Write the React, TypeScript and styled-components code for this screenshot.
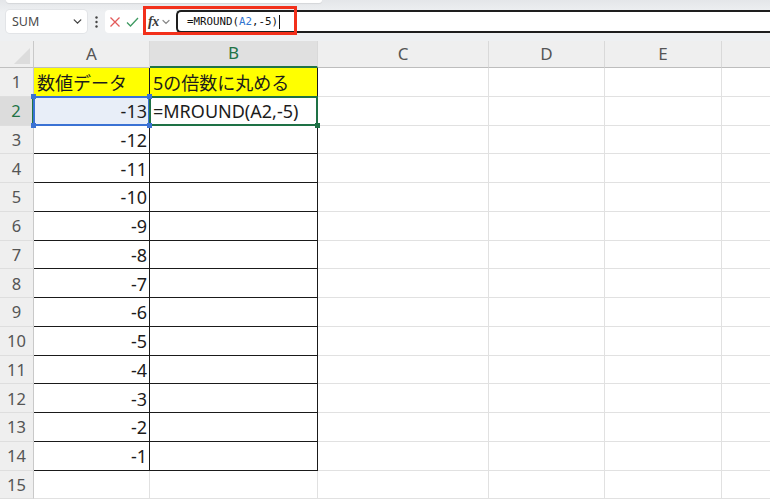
import React from 'react'
import styled, { createGlobalStyle, css } from 'styled-components'

const GlobalStyle = createGlobalStyle`
  html, body {
    margin: 0;
    padding: 0;
    background: #ffffff;
    overflow: hidden;
  }
  body {
    font-family: "Noto Sans", "Noto Sans CJK JP", sans-serif;
  }
`

const COLS = [
  { name: 'A', width: 116 },
  { name: 'B', width: 168 },
  { name: 'C', width: 171 },
  { name: 'D', width: 116 },
  { name: 'E', width: 117 },
  { name: '', width: 60 },
]

const DATA: Record<number, [string, string]> = {
  1: ['数値データ', '5の倍数に丸める'],
  2: ['-13', '=MROUND(A2,-5)'],
}
for (let r = 3; r <= 14; r++) DATA[r] = [String(r - 15), '']

const Page = styled.div`
  width: 770px;
  height: 500px;
  overflow: hidden;
  display: flex;
  flex-direction: column;
`

const TopArea = styled.div`
  position: relative;
  height: 41px;
  background: linear-gradient(#e4e6e9, #eef0f2 30%, #eef0f2);
  display: flex;
  flex-direction: column;
`

const RibbonEdge = styled.div`
  margin-left: 6px;
  width: 316px;
  height: 3px;
  background: #fff;
  border-radius: 0 0 5px 5px;
  box-shadow: 0 1px 1px rgba(0, 0, 0, 0.08);
`

const FormulaRow = styled.div`
  margin-top: 7px;
  height: 23px;
  display: flex;
  align-items: center;
  padding-left: 6px;
`

const NameBox = styled.div`
  width: 81px;
  height: 23px;
  box-sizing: border-box;
  background: #fff;
  border-radius: 4px;
  box-shadow: 0 0 0 1px #e2e4e7;
  display: flex;
  align-items: center;
  justify-content: space-between;
  padding: 0 4px 0 6px;
  font-size: 12.5px;
  color: #4a4a4a;
`

const Dots = styled.div`
  width: 18px;
  display: flex;
  justify-content: center;
`

const ActionBox = styled.div`
  width: 38px;
  height: 23px;
  background: #fff;
  border-radius: 4px 0 0 4px;
  display: flex;
  align-items: center;
  justify-content: space-around;
  padding: 0 2px;
  box-sizing: border-box;
`

const FxBox = styled.div`
  width: 33px;
  height: 23px;
  background: #fff;
  display: flex;
  align-items: center;
  padding-left: 5px;
  box-sizing: border-box;
  gap: 2px;
`

const FxText = styled.span`
  font-family: "Liberation Serif", serif;
  font-style: italic;
  font-weight: bold;
  font-size: 14px;
  color: #3a3a3a;
  letter-spacing: -0.5px;
`

const FormulaInput = styled.div`
  flex: 1;
  height: 23px;
  box-sizing: border-box;
  background: #fff;
  border: 2px solid #1e1e1e;
  border-right: none;
  border-radius: 5px 0 0 5px;
  display: flex;
  align-items: center;
  padding-left: 9px;
  font-family: "DejaVu Sans Mono", monospace;
  font-size: 10.8px;
  color: #111;
`

const Ref = styled.span`
  color: #2f74d0;
`

const Caret = styled.span`
  display: inline-block;
  width: 1px;
  height: 14px;
  background: #111;
  margin-left: 1px;
`

const RedFrame = styled.div`
  position: absolute;
  left: 143px;
  top: 6px;
  width: 154px;
  height: 29px;
  box-sizing: border-box;
  border: 3px solid #f2301b;
  pointer-events: none;
`

const Sheet = styled.div`
  flex: 1;
  display: grid;
  grid-template-columns: 34px ${COLS.map(c => `${c.width}px`).join(' ')};
  grid-template-rows: 27px repeat(15, 28.75px);
  background: #fff;
`

const Corner = styled.div`
  position: relative;
  background: #efefef;
  border-right: 1px solid #c9c9c9;
  border-bottom: 1px solid #c0c0c0;
  box-sizing: border-box;
  &::after {
    content: '';
    position: absolute;
    right: 3px;
    bottom: 3px;
    width: 16px;
    height: 16px;
    background: #dcdcdc;
    clip-path: polygon(100% 0, 100% 100%, 0 100%);
  }
`

const ColHead = styled.div<{ $active?: boolean }>`
  background: ${p => (p.$active ? '#e0e0e0' : '#efefef')};
  border-right: 1px solid #d9d9d9;
  border-bottom: ${p => (p.$active ? '2px solid #217346' : '1px solid #bdbdbd')};
  box-sizing: border-box;
  display: flex;
  align-items: center;
  justify-content: center;
  font-size: 17px;
  color: ${p => (p.$active ? '#217346' : '#555')};
  padding-bottom: 2px;
`

const RowHead = styled.div<{ $active?: boolean }>`
  background: ${p => (p.$active ? '#dcdcdc' : '#efefef')};
  border-right: ${p => (p.$active ? '2px solid #217346' : '1px solid #c9c9c9')};
  border-bottom: 1px solid #dedede;
  box-sizing: border-box;
  display: flex;
  align-items: center;
  justify-content: center;
  font-size: 16.5px;
  color: ${p => (p.$active ? '#217346' : '#555')};
`

const Cell = styled.div<{ $boxed?: boolean; $fill?: string; $right?: boolean; $sel?: 'ref' | 'active' }>`
  position: relative;
  box-sizing: border-box;
  background: ${p => p.$fill || '#fff'};
  border-right: 1px solid ${p => (p.$boxed ? '#1a1a1a' : '#e1e1e1')};
  border-bottom: 1px solid ${p => (p.$boxed ? '#1a1a1a' : '#e1e1e1')};
  display: flex;
  align-items: center;
  justify-content: ${p => (p.$right ? 'flex-end' : 'flex-start')};
  padding: 1px 2px 0 3px;
  font-family: "Noto Sans", "Noto Sans CJK JP", sans-serif;
  font-size: 18px;
  color: #1c1c1c;
  white-space: nowrap;
  ${p =>
    p.$sel &&
    css`
      &::before {
        content: '';
        position: absolute;
        left: -1px;
        top: -1px;
        right: -1px;
        bottom: -1px;
        border: 2px solid ${p.$sel === 'ref' ? '#3a72d4' : '#1e7145'};
        z-index: 2;
        pointer-events: none;
      }
    `}
`

const Handle = styled.span<{ $pos: 'tl' | 'tr' | 'bl' | 'br'; $color: string }>`
  position: absolute;
  width: 5px;
  height: 5px;
  background: ${p => p.$color};
  z-index: 3;
  ${p => (p.$pos[0] === 't' ? 'top: -3px;' : 'bottom: -3px;')}
  ${p => (p.$pos[1] === 'l' ? 'left: -3px;' : 'right: -3px;')}
`

const Chevron = ({ color = '#555', size = 9 }: { color?: string; size?: number }) => (
  <svg width={size} height={size} viewBox="0 0 10 10">
    <path d="M2 3.5 L5 6.5 L8 3.5" fill="none" stroke={color} strokeWidth="1.2" strokeLinecap="round" />
  </svg>
)

export default function App() {
  return (
    <>
      <GlobalStyle />
      <Page>
        <TopArea>
          <RibbonEdge />
          <FormulaRow>
            <NameBox>
              <span>SUM</span>
              <Chevron color="#444" size={11} />
            </NameBox>
            <Dots>
              <svg width="3" height="12" viewBox="0 0 3 12">
                <circle cx="1.5" cy="1.5" r="1.2" fill="#444" />
                <circle cx="1.5" cy="6" r="1.2" fill="#444" />
                <circle cx="1.5" cy="10.5" r="1.2" fill="#444" />
              </svg>
            </Dots>
            <ActionBox>
              <svg width="12" height="12" viewBox="0 0 12 12">
                <path d="M1.5 1.5 L10.5 10.5 M10.5 1.5 L1.5 10.5" stroke="#e35a5a" strokeWidth="1.3" />
              </svg>
              <svg width="13" height="12" viewBox="0 0 13 12">
                <path d="M1 6.5 L4.5 10 L12 2" fill="none" stroke="#3f9a62" strokeWidth="1.3" />
              </svg>
            </ActionBox>
            <FxBox>
              <FxText>fx</FxText>
              <Chevron color="#888" size={10} />
            </FxBox>
            <FormulaInput>
              <span>
                =MROUND(<Ref>A2</Ref>,-5)
              </span>
              <Caret />
            </FormulaInput>
          </FormulaRow>
          <RedFrame />
        </TopArea>
        <Sheet>
          <Corner />
          {COLS.map((c, i) => (
            <ColHead key={i} $active={c.name === 'B'}>
              {c.name}
            </ColHead>
          ))}
          {Array.from({ length: 15 }, (_, i) => i + 1).map(r => {
            const row = DATA[r]
            const boxed = r <= 14
            return (
              <React.Fragment key={r}>
                <RowHead $active={r === 2}>{r}</RowHead>
                <Cell
                  $boxed={boxed}
                  $fill={r === 1 ? '#ffff00' : r === 2 ? '#e8eef8' : undefined}
                  $right={r > 1}
                  $sel={r === 2 ? 'ref' : undefined}
                >
                  {row ? row[0] : ''}
                  {r === 2 && (
                    <>
                      <Handle $pos="tl" $color="#3a72d4" />
                      <Handle $pos="tr" $color="#3a72d4" />
                      <Handle $pos="bl" $color="#3a72d4" />
                      <Handle $pos="br" $color="#3a72d4" />
                    </>
                  )}
                </Cell>
                <Cell $boxed={boxed} $fill={r === 1 ? '#ffff00' : undefined} $sel={r === 2 ? 'active' : undefined}>
                  {row ? row[1] : ''}
                  {r === 2 && <Handle $pos="br" $color="#1e7145" />}
                </Cell>
                {COLS.slice(2).map((c, i) => (
                  <Cell key={i} />
                ))}
              </React.Fragment>
            )
          })}
        </Sheet>
      </Page>
    </>
  )
}
